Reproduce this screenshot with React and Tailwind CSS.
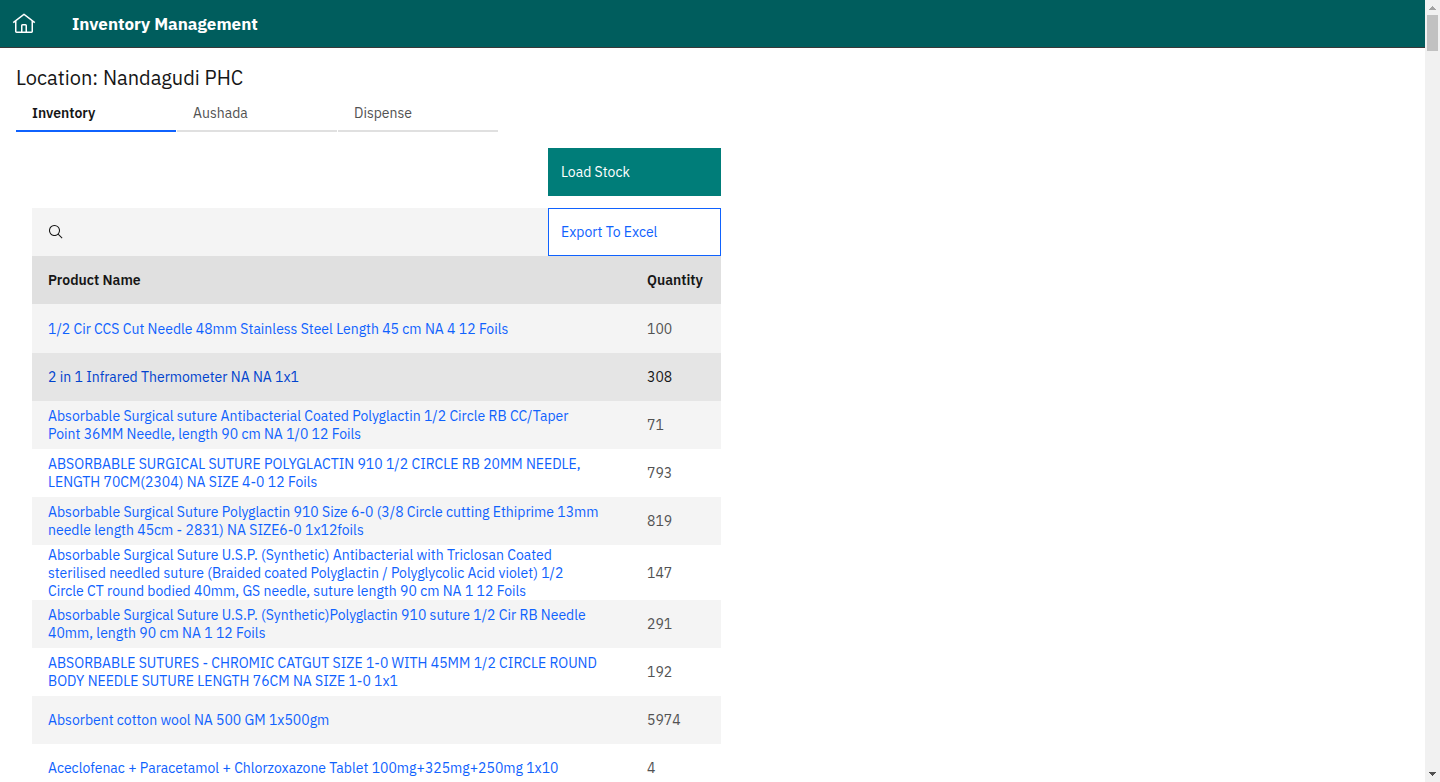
import React from "react";

const products = [
  { name: "1/2 Cir CCS Cut Needle 48mm Stainless Steel Length 45 cm NA 4 12 Foils", quantity: 100 },
  { name: "2 in 1 Infrared Thermometer NA NA 1x1", quantity: 308, active: true },
  { name: "Absorbable Surgical suture Antibacterial Coated Polyglactin 1/2 Circle RB CC/Taper Point 36MM Needle, length 90 cm NA 1/0 12 Foils", quantity: 71 },
  { name: "ABSORBABLE SURGICAL SUTURE POLYGLACTIN 910 1/2 CIRCLE RB 20MM NEEDLE, LENGTH 70CM(2304) NA SIZE 4-0 12 Foils", quantity: 793 },
  { name: "Absorbable Surgical Suture Polyglactin 910 Size 6-0 (3/8 Circle cutting Ethiprime 13mm needle length 45cm - 2831) NA SIZE6-0 1x12foils", quantity: 819 },
  { name: "Absorbable Surgical Suture U.S.P. (Synthetic) Antibacterial with Triclosan Coated sterilised needled suture (Braided coated Polyglactin / Polyglycolic Acid violet) 1/2 Circle CT round bodied 40mm, GS needle, suture length 90 cm NA 1 12 Foils", quantity: 147 },
  { name: "Absorbable Surgical Suture U.S.P. (Synthetic)Polyglactin 910 suture 1/2 Cir RB Needle 40mm, length 90 cm NA 1 12 Foils", quantity: 291 },
  { name: "ABSORBABLE SUTURES - CHROMIC CATGUT SIZE 1-0 WITH 45MM 1/2 CIRCLE ROUND BODY NEEDLE SUTURE LENGTH 76CM NA SIZE 1-0 1x1", quantity: 192 },
  { name: "Absorbent cotton wool NA 500 GM 1x500gm", quantity: 5974 },
  { name: "Aceclofenac + Paracetamol + Chlorzoxazone Tablet 100mg+325mg+250mg 1x10", quantity: 4 },
];

const tabs = ["Inventory", "Aushada", "Dispense"];

function HomeIcon() {
  return (
    <svg className="size-6" viewBox="0 0 32 32" fill="currentColor" aria-hidden="true">
      <path d="M16.6123,2.2138a1.01,1.01,0,0,0-1.2427,0L1,13.4194l1.2427,1.5717L4,13.6208V26a2.0041,2.0041,0,0,0,2,2H26a2.0037,2.0037,0,0,0,2-2V13.63L29.7573,15,31,13.4282ZM18,26H14V18h4Zm2,0V18a2.0023,2.0023,0,0,0-2-2H14a2.002,2.002,0,0,0-2,2v8H6V12.0615l10-7.79,10,7.8005V26Z" />
    </svg>
  );
}

function SearchIcon() {
  return (
    <svg className="size-4 shrink-0" viewBox="0 0 32 32" fill="currentColor" aria-hidden="true">
      <path d="M29,27.5859l-7.5521-7.5521a11.0177,11.0177,0,1,0-1.4141,1.4141L27.5859,29ZM4,13a9,9,0,1,1,9,9A9.01,9.01,0,0,1,4,13Z" />
    </svg>
  );
}

function Header() {
  return (
    <header className="flex h-12 items-center border-b border-[#393939] bg-[#005d5d] text-white">
      <a href="#home" aria-label="Home" className="flex size-12 items-center justify-center">
        <HomeIcon />
      </a>
      <h1 className="pl-6 text-[17px] leading-6 font-bold">Inventory Management</h1>
    </header>
  );
}

function Tabs() {
  return (
    <div role="tablist" className="flex gap-px">
      {tabs.map((tab, i) => (
        <button
          key={tab}
          type="button"
          role="tab"
          aria-selected={i === 0}
          className={
            i === 0
              ? "h-10 w-40 border-b-2 border-[#0f62fe] px-4 pt-1 text-left font-semibold text-[#161616]"
              : "h-10 w-40 border-b-2 border-[#e0e0e0] px-4 pt-1 text-left text-[#525252]"
          }
        >
          {tab}
        </button>
      ))}
    </div>
  );
}

function ProductRow({ product, index }) {
  const stripe = index % 2 === 0 ? "border-[#f4f4f4] bg-[#f4f4f4]" : "border-white bg-white";
  const tone = product.active ? "border-[#e5e5e5] bg-[#e5e5e5] text-[#161616]" : stripe + " text-[#525252]";
  return (
    <tr className={"h-12 border-t first:h-[49px] " + tone}>
      <td className="pr-8 pl-4">
        <a href="#product" className={product.active ? "text-[#0043ce]" : "text-[#0f62fe]"}>
          {product.name}
        </a>
      </td>
      <td className="px-4">{product.quantity}</td>
    </tr>
  );
}

function ScrollTrack() {
  return (
    <div aria-hidden="true" className="flex w-[15px] shrink-0 flex-col items-center bg-[#f1f1f1]">
      <svg className="h-[15px] w-[15px]" viewBox="0 0 15 15" fill="#a3a3a3">
        <path d="M7 6h1v1h1v1h1v1h1v1H4V9h1V8h1V7h1z" />
      </svg>
      <div className="h-9 w-[11px] bg-[#c1c1c1]" />
      <svg className="mt-auto h-[15px] w-[15px]" viewBox="0 0 15 15" fill="#505050">
        <path d="M4 5h7v1h-1v1H9v1H8v1H7V8H6V7H5V6H4z" />
      </svg>
    </div>
  );
}

export default function App() {
  return (
    <div className="flex h-screen overflow-hidden bg-white font-['IBM_Plex_Sans',Roboto,sans-serif] text-sm leading-[18px] text-[#161616]">
      <div className="min-w-0 flex-1 overflow-hidden">
        <Header />
        <main className="px-4 pt-4">
          <h2 className="text-xl leading-7">Location: Nandagudi PHC</h2>
          <Tabs />
          <section className="w-full max-w-[705px] pt-4 pl-4">
            <div className="flex justify-end">
              <button type="button" className="h-12 w-[173px] border border-[#007d79] bg-[#007d79] px-3 text-left text-white">
                Load Stock
              </button>
            </div>
            <div className="mt-3 flex h-12">
              <label className="flex flex-1 items-center gap-4 bg-[#f4f4f4] px-4">
                <SearchIcon />
                <input type="text" aria-label="Search" className="min-w-0 flex-1 bg-transparent outline-none" />
              </label>
              <button type="button" className="w-[173px] border border-[#0f62fe] bg-white px-3 text-left text-[#0f62fe]">
                Export To Excel
              </button>
            </div>
            <table className="w-full border-collapse text-left">
              <thead>
                <tr className="h-12 bg-[#e0e0e0]">
                  <th scope="col" className="px-4 font-semibold">Product Name</th>
                  <th scope="col" className="w-[90px] px-4 font-semibold">Quantity</th>
                </tr>
              </thead>
              <tbody>
                {products.map((product, i) => (
                  <ProductRow key={product.name} product={product} index={i} />
                ))}
              </tbody>
            </table>
          </section>
        </main>
      </div>
      <ScrollTrack />
    </div>
  );
}
